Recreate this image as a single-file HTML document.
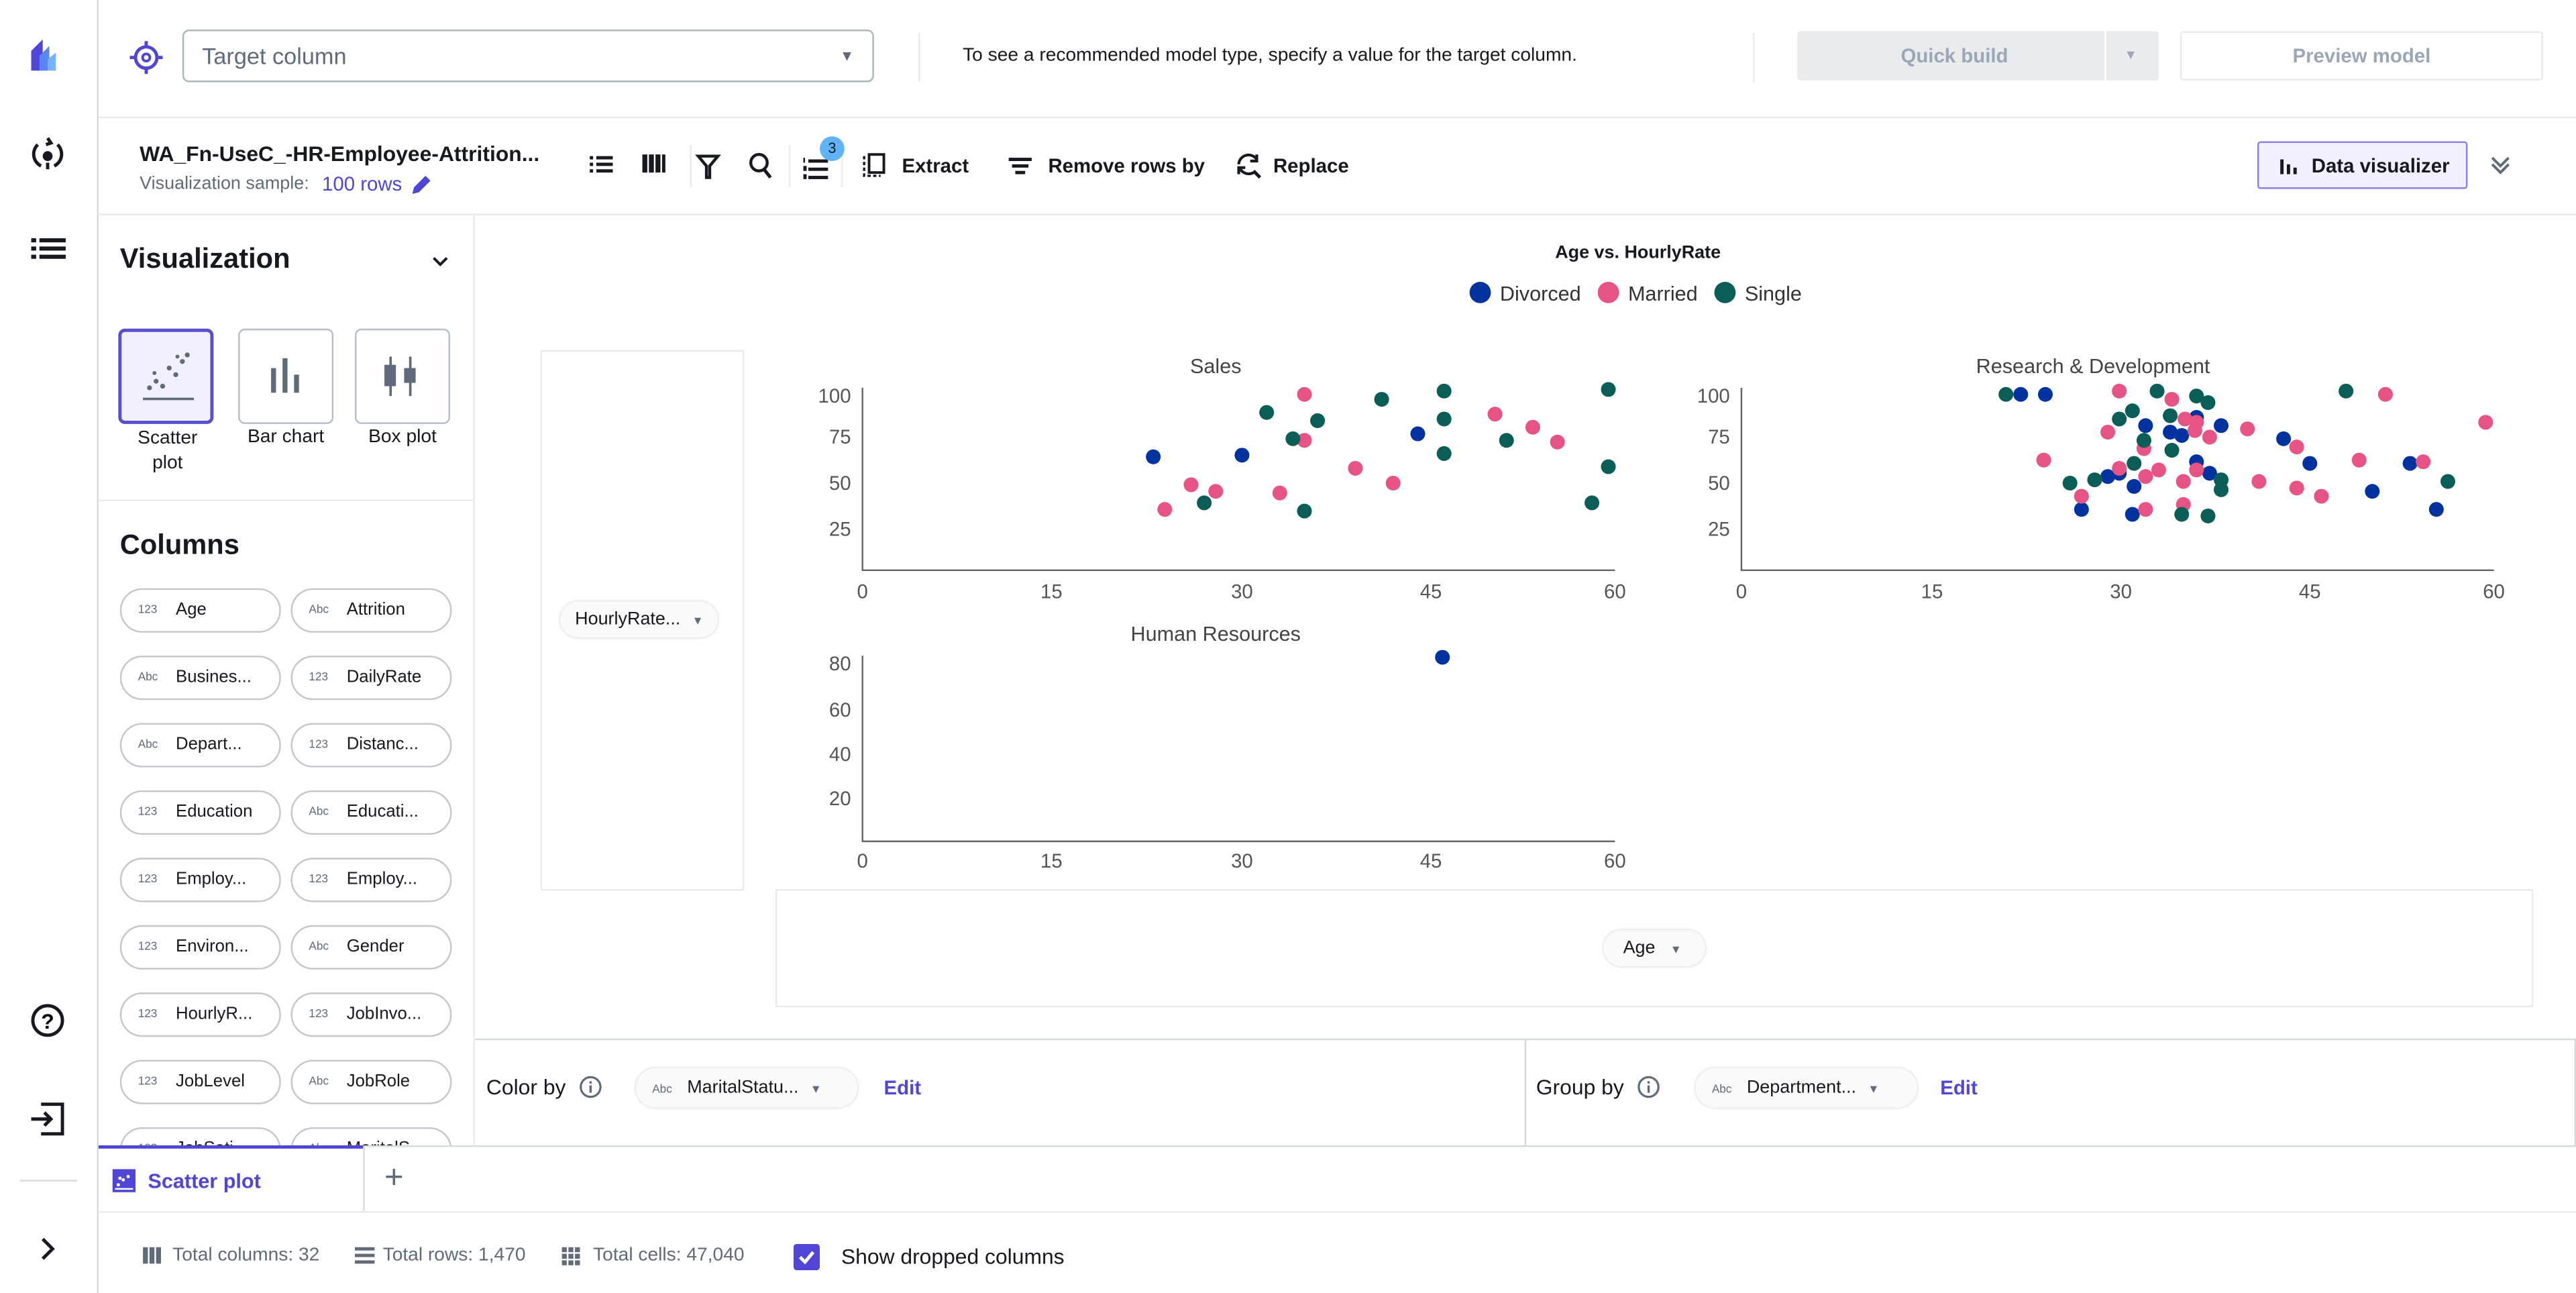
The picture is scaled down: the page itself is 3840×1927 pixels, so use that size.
<!DOCTYPE html>
<html><head><meta charset="utf-8"><style>
html,body{margin:0;padding:0;width:3840px;height:1927px;overflow:hidden;background:#fff}
#s{position:absolute;left:0;top:0;width:1568px;height:787px;transform:scale(2.44898);transform-origin:0 0;font-family:"Liberation Sans",sans-serif;color:#16191f}
.a{position:absolute}
.pill{position:absolute;border:1px solid #c6c6cd;border-radius:14px;font-size:10.5px;line-height:25px;box-sizing:border-box;width:98px;height:27px;background:#fff}
.pill i{font-style:normal;font-size:7px;color:#5f6b7a;position:absolute;left:10px;top:0}
.pill b{font-weight:normal;position:absolute;left:33px;top:0;white-space:nowrap}
.tile{position:absolute;top:200px;width:58px;height:58px;border:1px solid #b6bec9;border-radius:4px;box-sizing:border-box}
.lbl{position:absolute;font-size:11.5px;text-align:center}
.btn{position:absolute;font-size:12px;font-weight:bold}
</style></head><body><div id="s">
<div class="a" style="left:59px;top:0;width:1px;height:787px;background:#d5dbdb"></div>
<svg class="a" style="left:0;top:0" width="59" height="787">
<path d="M19 43 L19 31 L26 24 L26 43Z" fill="#4f46d8"/><path d="M24 43 L24 34 L30 28 L30 43Z" fill="#5b84f5"/><path d="M29 43 L29 36 L34 32 L34 43Z" fill="#76b2ff"/>
<g fill="none" stroke="#16191f" stroke-width="2"><path d="M23 88 A8 8 0 0 0 25 101"/><path d="M35 88 A8 8 0 0 1 33 101"/><path d="M29 84 L31 87 L28 88"/></g><circle cx="29" cy="95" r="3" fill="#16191f"/><rect x="28" y="99" width="2" height="4" fill="#16191f"/>
<g fill="#16191f"><rect x="19" y="145" width="3" height="2.5"/><rect x="24" y="145" width="16" height="2.5"/><rect x="19" y="150" width="3" height="2.5"/><rect x="24" y="150" width="16" height="2.5"/><rect x="19" y="155" width="3" height="2.5"/><rect x="24" y="155" width="16" height="2.5"/></g>
<circle cx="29" cy="621" r="9" fill="none" stroke="#16191f" stroke-width="2"/><text x="29" y="626" font-size="13" font-weight="bold" text-anchor="middle" font-family="Liberation Sans">?</text>
<g fill="none" stroke="#16191f" stroke-width="2"><path d="M25 672 H38 V690 H25"/><path d="M19 681 H31 M27 677 L31 681 L27 685"/></g>
<rect x="12" y="718" width="35" height="1" fill="#d5dbdb"/>
<path d="M26 754 L32 760 L26 766" fill="none" stroke="#16191f" stroke-width="2"/>
</svg>
<div class="a" style="left:60px;top:71px;width:1508px;height:1px;background:#e9ebed"></div>
<svg class="a" style="left:78px;top:24px" width="22" height="22"><circle cx="11" cy="11" r="6.5" fill="none" stroke="#4f46d8" stroke-width="2"/><circle cx="11" cy="11" r="2.2" fill="none" stroke="#4f46d8" stroke-width="1.6"/><path d="M11 1V5M11 17V21M1 11H5M17 11H21" stroke="#4f46d8" stroke-width="2"/></svg>
<div class="a" style="left:111px;top:18px;width:421px;height:32px;border:1px solid #aab7b8;border-radius:4px;box-sizing:border-box;font-size:14px;color:#5f6b7a;line-height:30px;padding-left:11px">Target column<span style="position:absolute;right:11px;top:0;font-size:9px;color:#5f6b7a">▼</span></div>
<div class="a" style="left:559px;top:20px;width:1px;height:30px;background:#e9ebed"></div>
<div class="a" style="left:586px;top:28px;font-size:11.5px">To see a recommended model type, specify a value for the target column.</div>
<div class="a" style="left:1067px;top:20px;width:1px;height:30px;background:#e9ebed"></div>
<div class="a" style="left:1094px;top:19px;width:220px;height:30px;background:#e9ebed;border-radius:2px"></div>
<div class="a" style="left:1281px;top:19px;width:1px;height:30px;background:#fff"></div>
<div class="btn" style="left:1157px;top:27px;color:#9ba7b6">Quick build</div>
<div class="a" style="left:1293px;top:29px;font-size:8px;color:#9ba7b6">▼</div>
<div class="a" style="left:1327px;top:19px;width:221px;height:30px;border:1px solid #e9ebed;border-radius:2px;box-sizing:border-box;font-size:12px;font-weight:bold;color:#9ba7b6;text-align:center;line-height:28px">Preview model</div>
<div class="a" style="left:85px;top:86px;font-size:13px;font-weight:bold">WA_Fn-UseC_-HR-Employee-Attrition...</div>
<div class="a" style="left:85px;top:106px;font-size:11px;color:#5f6b7a">Visualization sample:</div>
<div class="a" style="left:196px;top:105px;font-size:12px;color:#4f46d8">100 rows</div>
<svg class="a" style="left:248px;top:104px" width="16" height="16"><path d="M3 14 L4 10 L11 3 L14 6 L7 13Z" fill="#4f46d8"/></svg>
<svg class="a" style="left:355px;top:88px" width="170" height="26" fill="#16191f">
<rect x="4" y="7" width="2" height="2"/><rect x="8" y="7" width="10" height="2"/><rect x="4" y="11" width="2" height="2"/><rect x="8" y="11" width="10" height="2"/><rect x="4" y="15" width="2" height="2"/><rect x="8" y="15" width="10" height="2"/>
<rect x="36" y="6" width="3" height="11"/><rect x="40" y="6" width="3" height="11"/><rect x="44" y="6" width="3" height="11"/><rect x="48" y="6" width="2" height="11"/>
<path d="M70 7 H82 L77 13 V20 H75 V13Z" fill="none" stroke="#16191f" stroke-width="1.8"/>
<circle cx="107" cy="11" r="5" fill="none" stroke="#16191f" stroke-width="1.8"/><path d="M110 15 L114 20" stroke="#16191f" stroke-width="2"/>
<rect x="134" y="8" width="1" height="3"/><rect x="137" y="9" width="12" height="2"/><rect x="134" y="13" width="2" height="3"/><rect x="137" y="14" width="12" height="2"/><rect x="134" y="18" width="2" height="3"/><rect x="137" y="19" width="12" height="2"/>
<rect x="125" y="0" width="1" height="26" fill="#e9ebed"/><rect x="157" y="0" width="1" height="26" fill="#e9ebed"/><rect x="65" y="0" width="1" height="26" fill="#e9ebed"/>
</svg>
<div class="a" style="left:499px;top:83px;width:15px;height:15px;border-radius:50%;background:#5fb4f8;font-size:9px;text-align:center;line-height:15px">3</div>
<svg class="a" style="left:524px;top:92px" width="18" height="18"><rect x="5" y="2" width="9" height="11" fill="none" stroke="#16191f" stroke-width="1.6"/><path d="M2 3V15H12" fill="none" stroke="#16191f" stroke-width="1.4" stroke-dasharray="2 1.5"/></svg>
<div class="btn" style="left:549px;top:94px">Extract</div>
<svg class="a" style="left:613px;top:93px" width="16" height="16" fill="#16191f"><rect x="1" y="3" width="14" height="2"/><rect x="3" y="7" width="10" height="2"/><rect x="5" y="11" width="6" height="2"/></svg>
<div class="btn" style="left:638px;top:94px">Remove rows by</div>
<svg class="a" style="left:751px;top:92px" width="18" height="18"><path d="M3 8 A6 6 0 0 1 14 5 M14 2V6H10" fill="none" stroke="#16191f" stroke-width="1.7"/><path d="M3 14V10H7 M4 11 A6 6 0 0 0 12 13" fill="none" stroke="#16191f" stroke-width="1.7"/><path d="M12 12 L16 16" stroke="#16191f" stroke-width="2"/></svg>
<div class="btn" style="left:775px;top:94px">Replace</div>
<div class="a" style="left:1374px;top:86px;width:128px;height:29px;background:#f2f0fe;border:1px solid #8c7fe8;border-radius:2px;box-sizing:border-box"></div>
<svg class="a" style="left:1387px;top:94px" width="14" height="14" fill="#16191f"><rect x="1" y="3" width="2" height="9"/><rect x="5" y="6" width="2" height="6"/><rect x="9" y="8" width="2" height="4"/></svg>
<div class="btn" style="left:1407px;top:94px">Data visualizer</div>
<svg class="a" style="left:1515px;top:93px" width="14" height="14"><path d="M2 3L7 8L12 3M2 7L7 12L12 7" fill="none" stroke="#5f6b7a" stroke-width="1.6"/></svg>
<div class="a" style="left:60px;top:130px;width:1508px;height:1px;background:#e9ebed"></div>
<div class="a" style="left:288px;top:131px;width:1px;height:566px;background:#e9ebed"></div>
<div class="a" style="left:73px;top:148px;font-size:17px;font-weight:bold">Visualization</div>
<svg class="a" style="left:262px;top:153px" width="12" height="12"><path d="M2 4L6 8L10 4" fill="none" stroke="#16191f" stroke-width="1.6"/></svg>
<div class="tile" style="left:72px;border:2px solid #5a4fcf;background:#f2f0fe"></div>
<svg class="a" style="left:84px;top:211px" width="36" height="36" fill="#5f6b7a"><rect x="3" y="31" width="31" height="1.5"/><circle cx="7" cy="25" r="1.5"/><circle cx="11" cy="21" r="1.5"/><circle cx="15" cy="24" r="1.5"/><circle cx="19" cy="13" r="1.5"/><circle cx="23" cy="17" r="1.5"/><circle cx="27" cy="9" r="1.5"/><circle cx="30" cy="5" r="1.5"/><circle cx="10" cy="16" r="1.2"/><circle cx="24" cy="6" r="1.2"/></svg>
<div class="tile" style="left:145px"></div>
<svg class="a" style="left:160px;top:215px" width="28" height="28" fill="#5f6b7a"><rect x="5" y="9" width="3" height="15"/><rect x="12" y="3" width="3" height="21"/><rect x="19" y="13" width="3" height="11"/></svg>
<div class="tile" style="left:216px"></div>
<svg class="a" style="left:231px;top:215px" width="28" height="28" fill="#5f6b7a"><rect x="6" y="2" width="1.5" height="24"/><rect x="3" y="7" width="7" height="13"/><rect x="18" y="2" width="1.5" height="24"/><rect x="15" y="9" width="7" height="9"/></svg>
<div class="lbl" style="left:77px;top:260px;width:50px;line-height:15px">Scatter plot</div>
<div class="lbl" style="left:140px;top:260px;width:68px">Bar chart</div>
<div class="lbl" style="left:212px;top:260px;width:66px">Box plot</div>
<div class="a" style="left:60px;top:304px;width:228px;height:1px;background:#e9ebed"></div>
<div class="a" style="left:73px;top:322px;font-size:17px;font-weight:bold">Columns</div>
<div class="a" style="left:60px;top:355px;width:228px;height:342px;overflow:hidden">
<div class="pill" style="left:13px;top:3px"><i>123</i><b>Age</b></div><div class="pill" style="left:117px;top:3px"><i>Abc</i><b>Attrition</b></div>
<div class="pill" style="left:13px;top:44px"><i>Abc</i><b>Busines...</b></div><div class="pill" style="left:117px;top:44px"><i>123</i><b>DailyRate</b></div>
<div class="pill" style="left:13px;top:85px"><i>Abc</i><b>Depart...</b></div><div class="pill" style="left:117px;top:85px"><i>123</i><b>Distanc...</b></div>
<div class="pill" style="left:13px;top:126px"><i>123</i><b>Education</b></div><div class="pill" style="left:117px;top:126px"><i>Abc</i><b>Educati...</b></div>
<div class="pill" style="left:13px;top:167px"><i>123</i><b>Employ...</b></div><div class="pill" style="left:117px;top:167px"><i>123</i><b>Employ...</b></div>
<div class="pill" style="left:13px;top:208px"><i>123</i><b>Environ...</b></div><div class="pill" style="left:117px;top:208px"><i>Abc</i><b>Gender</b></div>
<div class="pill" style="left:13px;top:249px"><i>123</i><b>HourlyR...</b></div><div class="pill" style="left:117px;top:249px"><i>123</i><b>JobInvo...</b></div>
<div class="pill" style="left:13px;top:290px"><i>123</i><b>JobLevel</b></div><div class="pill" style="left:117px;top:290px"><i>Abc</i><b>JobRole</b></div>
<div class="pill" style="left:13px;top:331px"><i>123</i><b>JobSati...</b></div><div class="pill" style="left:117px;top:331px"><i>Abc</i><b>MaritalS...</b></div>
</div>
<div class="a" style="left:329px;top:213px;width:124px;height:329px;border:1px solid #e9ebed;box-sizing:border-box"></div>
<div class="a" style="left:341px;top:366px;width:96px;height:22px;border-radius:11px;background:#fafafa;box-shadow:0 0 2px #ccc;font-size:11px;line-height:22px;padding-left:9px;box-sizing:border-box">HourlyRate... <span style="font-size:7px;color:#5f6b7a;margin-left:4px">▼</span></div>
<div class="a" style="left:472px;top:541px;width:1070px;height:72px;border:1px solid #e9ebed;box-sizing:border-box"></div>
<div class="a" style="left:976px;top:566px;width:62px;height:22px;border-radius:11px;background:#fafafa;box-shadow:0 0 2px #ccc;font-size:11px;line-height:22px;padding-left:12px;box-sizing:border-box">Age <span style="font-size:7px;color:#5f6b7a;margin-left:6px">▼</span></div>
<svg class="a" style="left:0;top:0" width="1568" height="787" font-family="Liberation Sans">
<text x="997" y="157" font-size="11" font-weight="bold" text-anchor="middle" fill="#16191f">Age vs. HourlyRate</text>
<circle cx="901" cy="178" r="6.5" fill="#0033a0"/><text x="913" y="183" font-size="12.5" fill="#333">Divorced</text>
<circle cx="979" cy="178" r="6.5" fill="#e75384"/><text x="991" y="183" font-size="12.5" fill="#333">Married</text>
<circle cx="1050" cy="178" r="6.5" fill="#0b5e57"/><text x="1062" y="183" font-size="12.5" fill="#333">Single</text>
<g font-size="12.5" fill="#444" text-anchor="middle">
<text x="740" y="227">Sales</text><text x="1274" y="227">Research &amp; Development</text><text x="740" y="390">Human Resources</text>
</g>
<g stroke="#666" stroke-width="1" fill="none">
<path d="M525 236V347H983"/><path d="M1060 236V347H1518"/><path d="M525 399V512H983"/>
</g>
<g font-size="12" fill="#555" text-anchor="end">
<text x="518" y="245">100</text><text x="518" y="270">75</text><text x="518" y="298">50</text><text x="518" y="326">25</text>
<text x="1053" y="245">100</text><text x="1053" y="270">75</text><text x="1053" y="298">50</text><text x="1053" y="326">25</text>
<text x="518" y="408">80</text><text x="518" y="436">60</text><text x="518" y="463">40</text><text x="518" y="490">20</text>
</g>
<g font-size="12" fill="#555" text-anchor="middle">
<text x="525" y="364">0</text><text x="640" y="364">15</text><text x="756" y="364">30</text><text x="871" y="364">45</text><text x="983" y="364">60</text>
<text x="1060" y="364">0</text><text x="1176" y="364">15</text><text x="1291" y="364">30</text><text x="1406" y="364">45</text><text x="1518" y="364">60</text>
<text x="525" y="528">0</text><text x="640" y="528">15</text><text x="756" y="528">30</text><text x="871" y="528">45</text><text x="983" y="528">60</text>
</g>
<g fill="#0033a0">
<circle cx="702" cy="278" r="4.5"/><circle cx="756" cy="277" r="4.5"/><circle cx="863" cy="264" r="4.5"/>
<circle cx="1230" cy="240" r="4.5"/><circle cx="1245" cy="240" r="4.5"/><circle cx="1290" cy="288" r="4.5"/><circle cx="1299" cy="296" r="4.5"/><circle cx="1306" cy="259" r="4.5"/><circle cx="1321" cy="263" r="4.5"/><circle cx="1328" cy="265" r="4.5"/><circle cx="1337" cy="254" r="4.5"/><circle cx="1352" cy="259" r="4.5"/><circle cx="1390" cy="267" r="4.5"/><circle cx="1406" cy="282" r="4.5"/><circle cx="1444" cy="299" r="4.5"/><circle cx="1467" cy="282" r="4.5"/><circle cx="1483" cy="310" r="4.5"/><circle cx="1267" cy="310" r="4.5"/><circle cx="1298" cy="313" r="4.5"/><circle cx="1337" cy="281" r="4.5"/><circle cx="1345" cy="288" r="4.5"/><circle cx="1283" cy="290" r="4.5"/>
<circle cx="878" cy="400" r="4.5"/>
</g>
<g fill="#e75384">
<circle cx="709" cy="310" r="4.5"/><circle cx="725" cy="295" r="4.5"/><circle cx="740" cy="299" r="4.5"/><circle cx="779" cy="300" r="4.5"/><circle cx="794" cy="240" r="4.5"/><circle cx="794" cy="268" r="4.5"/><circle cx="825" cy="285" r="4.5"/><circle cx="848" cy="294" r="4.5"/><circle cx="910" cy="252" r="4.5"/><circle cx="933" cy="260" r="4.5"/><circle cx="948" cy="269" r="4.5"/>
<circle cx="1244" cy="280" r="4.5"/><circle cx="1290" cy="238" r="4.5"/><circle cx="1267" cy="302" r="4.5"/><circle cx="1283" cy="263" r="4.5"/><circle cx="1290" cy="285" r="4.5"/><circle cx="1305" cy="273" r="4.5"/><circle cx="1306" cy="310" r="4.5"/><circle cx="1322" cy="243" r="4.5"/><circle cx="1330" cy="255" r="4.5"/><circle cx="1337" cy="257" r="4.5"/><circle cx="1336" cy="262" r="4.5"/><circle cx="1345" cy="266" r="4.5"/><circle cx="1314" cy="286" r="4.5"/><circle cx="1329" cy="307" r="4.5"/><circle cx="1368" cy="261" r="4.5"/><circle cx="1375" cy="293" r="4.5"/><circle cx="1398" cy="272" r="4.5"/><circle cx="1398" cy="297" r="4.5"/><circle cx="1413" cy="302" r="4.5"/><circle cx="1436" cy="280" r="4.5"/><circle cx="1452" cy="240" r="4.5"/><circle cx="1475" cy="281" r="4.5"/><circle cx="1513" cy="257" r="4.5"/><circle cx="1329" cy="293" r="4.5"/><circle cx="1337" cy="286" r="4.5"/><circle cx="1306" cy="290" r="4.5"/>
</g>
<g fill="#0b5e57">
<circle cx="733" cy="306" r="4.5"/><circle cx="771" cy="251" r="4.5"/><circle cx="787" cy="267" r="4.5"/><circle cx="794" cy="311" r="4.5"/><circle cx="802" cy="256" r="4.5"/><circle cx="841" cy="243" r="4.5"/><circle cx="879" cy="238" r="4.5"/><circle cx="879" cy="255" r="4.5"/><circle cx="879" cy="276" r="4.5"/><circle cx="917" cy="268" r="4.5"/><circle cx="969" cy="306" r="4.5"/><circle cx="979" cy="237" r="4.5"/><circle cx="979" cy="284" r="4.5"/>
<circle cx="1221" cy="240" r="4.5"/><circle cx="1260" cy="294" r="4.5"/><circle cx="1275" cy="292" r="4.5"/><circle cx="1290" cy="255" r="4.5"/><circle cx="1298" cy="250" r="4.5"/><circle cx="1305" cy="268" r="4.5"/><circle cx="1313" cy="238" r="4.5"/><circle cx="1321" cy="253" r="4.5"/><circle cx="1322" cy="274" r="4.5"/><circle cx="1337" cy="241" r="4.5"/><circle cx="1344" cy="245" r="4.5"/><circle cx="1352" cy="292" r="4.5"/><circle cx="1352" cy="298" r="4.5"/><circle cx="1299" cy="282" r="4.5"/><circle cx="1328" cy="313" r="4.5"/><circle cx="1344" cy="314" r="4.5"/><circle cx="1428" cy="238" r="4.5"/><circle cx="1490" cy="293" r="4.5"/>
</g>
</svg>
<div class="a" style="left:289px;top:632px;width:1279px;height:1px;background:#d5dbdb"></div>
<div class="a" style="left:928px;top:632px;width:1px;height:65px;background:#d5dbdb"></div>
<div class="a" style="left:1567px;top:632px;width:1px;height:65px;background:#d5dbdb"></div>
<div class="a" style="left:296px;top:654px;font-size:13px">Color by</div>
<svg class="a" style="left:352px;top:654px" width="15" height="15"><circle cx="7.5" cy="7.5" r="6" fill="none" stroke="#5f6b7a" stroke-width="1.3"/><rect x="6.8" y="6.5" width="1.4" height="4.5" fill="#5f6b7a"/><rect x="6.8" y="4" width="1.4" height="1.4" fill="#5f6b7a"/></svg>
<div class="a" style="left:387px;top:650px;width:135px;height:24px;border-radius:12px;background:#fafafa;box-shadow:0 0 2px #ccc;font-size:11px;line-height:24px;padding-left:10px;box-sizing:border-box"><span style="font-size:7px;color:#5f6b7a">Abc</span>&nbsp;&nbsp;&nbsp;MaritalStatu... <span style="font-size:7px;color:#5f6b7a;margin-left:4px">▼</span></div>
<div class="a" style="left:538px;top:655px;font-size:12px;font-weight:bold;color:#4f46d8">Edit</div>
<div class="a" style="left:935px;top:654px;font-size:13px">Group by</div>
<svg class="a" style="left:996px;top:654px" width="15" height="15"><circle cx="7.5" cy="7.5" r="6" fill="none" stroke="#5f6b7a" stroke-width="1.3"/><rect x="6.8" y="6.5" width="1.4" height="4.5" fill="#5f6b7a"/><rect x="6.8" y="4" width="1.4" height="1.4" fill="#5f6b7a"/></svg>
<div class="a" style="left:1032px;top:650px;width:135px;height:24px;border-radius:12px;background:#fafafa;box-shadow:0 0 2px #ccc;font-size:11px;line-height:24px;padding-left:10px;box-sizing:border-box"><span style="font-size:7px;color:#5f6b7a">Abc</span>&nbsp;&nbsp;&nbsp;Department... <span style="font-size:7px;color:#5f6b7a;margin-left:4px">▼</span></div>
<div class="a" style="left:1181px;top:655px;font-size:12px;font-weight:bold;color:#4f46d8">Edit</div>
<div class="a" style="left:60px;top:697px;width:1508px;height:1px;background:#d5dbdb"></div>
<div class="a" style="left:60px;top:697px;width:161px;height:2px;background:#4f46d8"></div>
<div class="a" style="left:221px;top:698px;width:1px;height:39px;background:#d5dbdb"></div>
<div class="a" style="left:60px;top:737px;width:1508px;height:1px;background:#e9ebed"></div>
<svg class="a" style="left:68px;top:711px" width="15" height="15"><rect x="0.5" y="0.5" width="14" height="14" fill="#4f46d8"/><g fill="#fff"><circle cx="4" cy="10" r="1"/><circle cx="7" cy="7" r="1"/><circle cx="10" cy="5" r="1"/><circle cx="5" cy="6" r="1"/><rect x="2" y="12" width="11" height="1"/></g></svg>
<div class="a" style="left:90px;top:712px;font-size:12.5px;font-weight:bold;color:#4f46d8">Scatter plot</div>
<div class="a" style="left:234px;top:706px;font-size:20px;color:#5f6b7a">+</div>
<svg class="a" style="left:87px;top:758px" width="14" height="13" fill="#5f6b7a"><rect x="0" y="1" width="3" height="10"/><rect x="4" y="1" width="3" height="10"/><rect x="8" y="1" width="3" height="10"/></svg>
<div class="a" style="left:105px;top:758px;font-size:11.5px;color:#5f6b7a">Total columns: 32</div>
<svg class="a" style="left:216px;top:758px" width="14" height="13" fill="#5f6b7a"><rect x="0" y="1" width="12" height="2"/><rect x="0" y="5" width="12" height="2"/><rect x="0" y="9" width="12" height="2"/></svg>
<div class="a" style="left:233px;top:758px;font-size:11.5px;color:#5f6b7a">Total rows: 1,470</div>
<svg class="a" style="left:342px;top:758px" width="14" height="13" fill="#5f6b7a"><rect x="0" y="1" width="3" height="3"/><rect x="4" y="1" width="3" height="3"/><rect x="8" y="1" width="3" height="3"/><rect x="0" y="5" width="3" height="3"/><rect x="4" y="5" width="3" height="3"/><rect x="8" y="5" width="3" height="3"/><rect x="0" y="9" width="3" height="3"/><rect x="4" y="9" width="3" height="3"/><rect x="8" y="9" width="3" height="3"/></svg>
<div class="a" style="left:361px;top:758px;font-size:11.5px;color:#5f6b7a">Total cells: 47,040</div>
<svg class="a" style="left:483px;top:757px" width="16" height="16"><rect x="0" y="0" width="16" height="16" rx="2" fill="#4f46d8"/><path d="M4 8L7 11L12 5" fill="none" stroke="#fff" stroke-width="2"/></svg>
<div class="a" style="left:512px;top:757px;font-size:13px">Show dropped columns</div>
</div></body></html>
